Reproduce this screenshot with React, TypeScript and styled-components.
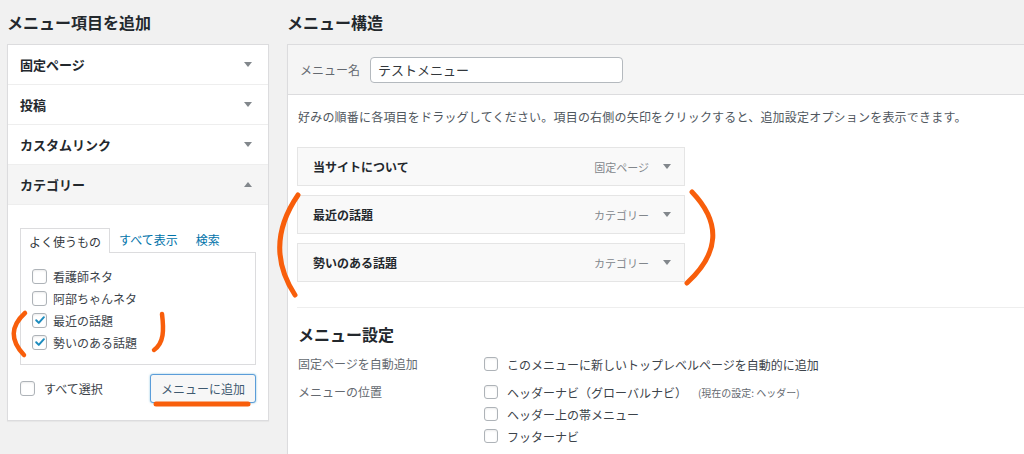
import styled, { createGlobalStyle } from "styled-components";

const GlobalStyle = createGlobalStyle`
  html, body {
    margin: 0;
    padding: 0;
    background: #f1f1f1;
    overflow: hidden;
  }
  body {
    font-family: "Noto Sans CJK JP", "Noto Sans", sans-serif;
    color: #23282d;
  }
`;

const Page = styled.div`
  position: relative;
  width: 1024px;
  height: 454px;
  box-sizing: border-box;
  display: flex;
  align-items: flex-start;
  padding-left: 7px;
  gap: 18px;
  overflow: hidden;
`;

const Column = styled.div<{ $width?: number }>`
  display: flex;
  flex-direction: column;
  width: ${(p) => (p.$width ? `${p.$width}px` : "auto")};
  flex: ${(p) => (p.$width ? "none" : "1")};
  min-width: 0;
`;

const Heading = styled.h2`
  margin: 0;
  font-size: 16px;
  font-weight: 700;
  line-height: 44px;
  height: 44px;
  white-space: nowrap;
`;

const Panel = styled.div<{ $open?: boolean }>`
  background: #fff;
  border: 1px solid #dcdcde;
  border-right: ${(p) => (p.$open ? "none" : "1px solid #dcdcde")};
  border-bottom: ${(p) => (p.$open ? "none" : "1px solid #dcdcde")};
  box-shadow: 0 1px 1px rgba(0, 0, 0, 0.04);
`;

const AccHeader = styled.div<{ $open?: boolean }>`
  display: flex;
  align-items: center;
  justify-content: space-between;
  height: 39px;
  padding: 0 16px 0 12px;
  border-bottom: 1px solid #eee;
  background: ${(p) => (p.$open ? "#f5f5f5" : "#fff")};
  font-size: 13px;
  font-weight: 700;
`;

const Arrow = ({ up }: { up?: boolean }) => (
  <svg width="8" height="5" viewBox="0 0 8 5">
    <path d={up ? "M0 5h8L4 0z" : "M0 0h8L4 5z"} fill="#82878c" />
  </svg>
);

const AccBody = styled.div`
  padding: 23px 12px 17px 12px;
`;

const TabList = styled.div`
  display: flex;
  align-items: stretch;
  height: 24px;
  position: relative;
  z-index: 1;
`;

const Tab = styled.div<{ $active?: boolean }>`
  display: flex;
  align-items: center;
  font-size: 12px;
  padding: 0 ${(p) => (p.$active ? "8px" : "9px")};
  color: ${(p) => (p.$active ? "#32373c" : "#0073aa")};
  background: ${(p) => (p.$active ? "#fff" : "transparent")};
  border: ${(p) => (p.$active ? "1px solid #dcdcde" : "none")};
  border-bottom: none;
  height: ${(p) => (p.$active ? "24px" : "23px")};
`;

const TabPanel = styled.div`
  border: 1px solid #dcdcde;
  padding: 12px 11px 11px 11px;
`;

const CheckRow = styled.label`
  display: flex;
  align-items: center;
  gap: 6px;
  height: 22px;
  font-size: 12px;
  color: #3c434a;
`;

const Box = styled.span<{ $size?: number }>`
  display: inline-flex;
  align-items: center;
  justify-content: center;
  flex: none;
  width: ${(p) => p.$size ?? 15}px;
  height: ${(p) => p.$size ?? 15}px;
  box-sizing: border-box;
  border: 1px solid #aeb3b8;
  border-radius: 3px;
  background: #fff;
  box-shadow: inset 0 1px 2px rgba(0, 0, 0, 0.08);
`;

const Check = ({ checked, size }: { checked?: boolean; size?: number }) => (
  <Box $size={size}>
    {checked && (
      <svg width="12" height="12" viewBox="0 0 12 12">
        <path
          d="M2.2 6.2l2.6 2.7L9.9 3.2"
          fill="none"
          stroke="#1e8cbe"
          strokeWidth="2"
          strokeLinecap="round"
          strokeLinejoin="round"
        />
      </svg>
    )}
  </Box>
);

const Footer = styled.div`
  display: flex;
  align-items: center;
  justify-content: space-between;
  margin-top: 9px;
`;

const SelectAll = styled.label`
  display: flex;
  align-items: center;
  gap: 9px;
  font-size: 12px;
  color: #3c434a;
`;

const Button = styled.button`
  height: 29px;
  padding: 0 10px;
  font-family: inherit;
  font-size: 12px;
  color: #3f5a70;
  background: #f7f7f7;
  border: 1px solid #5b9dd9;
  border-radius: 3px;
  box-shadow: 0 0 2px rgba(30, 140, 190, 0.6);
`;

const NameBar = styled.div`
  display: flex;
  align-items: center;
  gap: 10px;
  height: 49px;
  padding: 0 12px;
  background: #f5f5f5;
  border-bottom: 1px solid #dcdcde;
`;

const Label = styled.span`
  font-size: 12px;
  color: #646970;
`;

const NameInput = styled.div`
  display: flex;
  align-items: center;
  width: 253px;
  height: 26px;
  box-sizing: border-box;
  padding: 0 7px;
  font-size: 13px;
  color: #32373c;
  background: #fff;
  border: 1px solid #b4b9be;
  border-radius: 4px;
`;

const Body = styled.div`
  padding: 0 0 30px 9px;
`;

const Help = styled.p`
  margin: 13px 0 21px 1px;
  font-size: 12px;
  line-height: 18px;
  letter-spacing: 0.2px;
  white-space: nowrap;
  color: #50575e;
`;

const Items = styled.div`
  display: flex;
  flex-direction: column;
  gap: 9px;
  width: 388px;
`;

const Item = styled.div`
  display: flex;
  align-items: center;
  height: 37px;
  padding: 0 13px 0 15px;
  background: #f9f9f9;
  border: 1px solid #e5e5e5;
`;

const ItemTitle = styled.span`
  flex: 1;
  font-size: 12px;
  font-weight: 700;
`;

const ItemType = styled.span`
  font-size: 11px;
  color: #82878c;
  margin-right: 14px;
`;

const Settings = styled.div`
  margin-top: 25px;
  border-top: 1px solid #eee;
  padding-left: 1px;
`;

const SubHeading = styled.h3`
  margin: 14px 0 7px;
  font-size: 16px;
  font-weight: 700;
  line-height: 24px;
`;

const SettingRow = styled.div`
  display: grid;
  grid-template-columns: 186px 1fr;
  margin-bottom: 6px;
`;

const SettingLabel = styled.div`
  font-size: 12px;
  line-height: 22px;
  color: #646970;
`;

const Options = styled.div`
  display: flex;
  flex-direction: column;
`;

const Option = styled.label`
  display: flex;
  align-items: center;
  gap: 9px;
  height: 22px;
  font-size: 12px;
  color: #3c434a;
`;

const Note = styled.span`
  font-size: 10px;
  color: #646970;
  margin-left: 2px;
`;

const Marks = styled.svg`
  position: absolute;
  left: 0;
  top: 0;
  pointer-events: none;
`;

const accordion = ["固定ページ", "投稿", "カスタムリンク"];
const categories = [
  { name: "看護師ネタ", checked: false },
  { name: "阿部ちゃんネタ", checked: false },
  { name: "最近の話題", checked: true },
  { name: "勢いのある話題", checked: true },
];
const menuItems = [
  { title: "当サイトについて", type: "固定ページ" },
  { title: "最近の話題", type: "カテゴリー" },
  { title: "勢いのある話題", type: "カテゴリー" },
];

export default function App() {
  return (
    <>
      <GlobalStyle />
      <Page>
        <Column $width={262}>
          <Heading>メニュー項目を追加</Heading>
          <Panel>
            {accordion.map((a) => (
              <AccHeader key={a}>
                {a}
                <Arrow />
              </AccHeader>
            ))}
            <AccHeader $open>
              カテゴリー
              <Arrow up />
            </AccHeader>
            <AccBody>
              <TabList>
                <Tab $active>よく使うもの</Tab>
                <Tab>すべて表示</Tab>
                <Tab>検索</Tab>
              </TabList>
              <TabPanel>
                {categories.map((c) => (
                  <CheckRow key={c.name}>
                    <Check checked={c.checked} />
                    {c.name}
                  </CheckRow>
                ))}
              </TabPanel>
              <Footer>
                <SelectAll>
                  <Check />
                  すべて選択
                </SelectAll>
                <Button>メニューに追加</Button>
              </Footer>
            </AccBody>
          </Panel>
        </Column>

        <Column>
          <Heading>メニュー構造</Heading>
          <Panel $open>
            <NameBar>
              <Label>メニュー名</Label>
              <NameInput>テストメニュー</NameInput>
            </NameBar>
            <Body>
              <Help>
                好みの順番に各項目をドラッグしてください。項目の右側の矢印をクリックすると、追加設定オプションを表示できます。
              </Help>
              <Items>
                {menuItems.map((m) => (
                  <Item key={m.title}>
                    <ItemTitle>{m.title}</ItemTitle>
                    <ItemType>{m.type}</ItemType>
                    <Arrow />
                  </Item>
                ))}
              </Items>
              <Settings>
                <SubHeading>メニュー設定</SubHeading>
                <SettingRow>
                  <SettingLabel>固定ページを自動追加</SettingLabel>
                  <Options>
                    <Option>
                      <Check size={14} />
                      このメニューに新しいトップレベルページを自動的に追加
                    </Option>
                  </Options>
                </SettingRow>
                <SettingRow>
                  <SettingLabel>メニューの位置</SettingLabel>
                  <Options>
                    <Option>
                      <Check size={14} />
                      ヘッダーナビ（グローバルナビ）
                      <Note>(現在の設定: ヘッダー)</Note>
                    </Option>
                    <Option>
                      <Check size={14} />
                      ヘッダー上の帯メニュー
                    </Option>
                    <Option>
                      <Check size={14} />
                      フッターナビ
                    </Option>
                  </Options>
                </SettingRow>
              </Settings>
            </Body>
          </Panel>
        </Column>

        <Marks width="1024" height="454" viewBox="0 0 1024 454">
          <g fill="none" stroke="#f85e0b" strokeLinecap="round">
            <path d="M25 313 Q3 333 24 355" strokeWidth="4.5" />
            <path d="M162 314 C164 330 164 343 154 350" strokeWidth="4.5" />
            <path d="M156 404 L248 404" strokeWidth="5" />
            <path d="M298 195 Q263 246 295 295" strokeWidth="5" />
            <path d="M692 192 Q736 238 687 283" strokeWidth="5" />
          </g>
        </Marks>
      </Page>
    </>
  );
}
